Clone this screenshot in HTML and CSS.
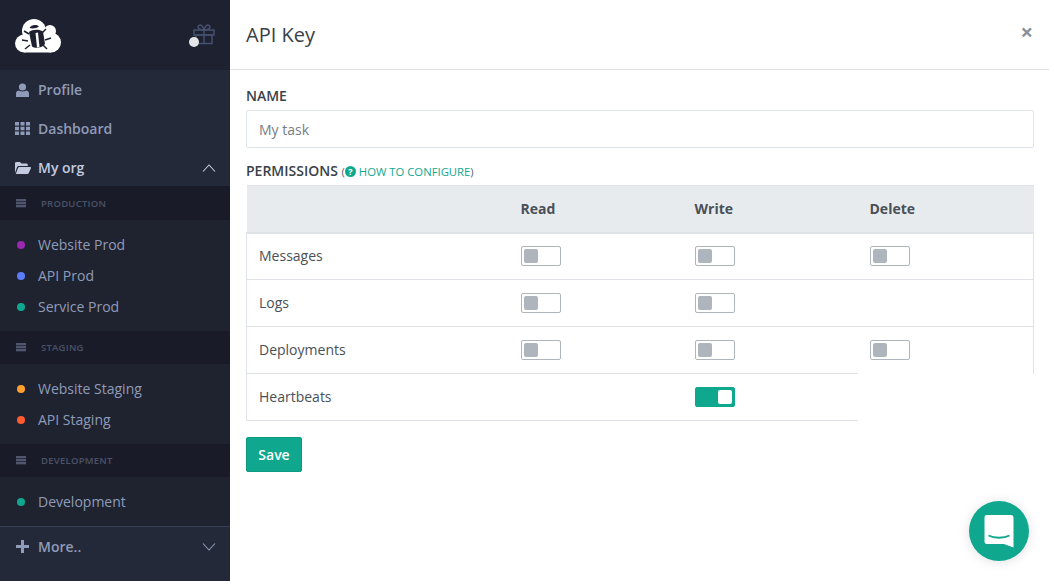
FILE: index.html
```html
<!DOCTYPE html>
<html lang="en">
<head>
    <meta charset="UTF-8">
    <title>API Key</title>
    <link rel="stylesheet" href="styles.css">
</head>
<body>
    <div class="app">
        <aside class="sidebar">
            <div class="brand">
                <svg class="logo" width="48" height="36" viewBox="0 0 48 36">
                    <g fill="#fff">
                        <circle cx="9" cy="26.500" r="9"/>
                        <circle cx="36" cy="25.500" r="10"/>
                        <circle cx="19" cy="14" r="12"/>
                        <circle cx="35" cy="14" r="6"/>
                        <rect x="9" y="20" width="27" height="15.500"/>
                    </g>
                    <path fill="none" stroke="#1d2130" stroke-width="1.500" d="M9 14L14 17M31 12L27 16M7 23L13 24M36 21L30 23M10 32L15 28M32 32L28 28"/>
                    <path fill="#1d2130" d="M14 15C17 12.500 24 12 28 14.500L30 27C27 31 20 32 17 29.500Z"/>
                    <path fill="#fff" d="M20.500 16L23 15.500L24.500 30L22 30.500Z"/>
                    <path fill="#1d2130" d="M14.500 11C16 8 21 7 24 9.500C22 11.500 17 12 14.500 11Z"/>
                </svg>
                <span class="gift">
                    <svg width="23" height="21" viewBox="0 0 23 21" fill="none" stroke="#46506f" stroke-width="1.500">
                        <rect x="1" y="6" width="20" height="5"/>
                        <rect x="3" y="11" width="16" height="8.500"/>
                        <path d="M11 6V19.500M11 6C8 6 5 5 5 2.800C5 1 7.500 0.500 9 2C10 3 11 5 11 6ZM11 6C14 6 17 5 17 2.800C17 1 14.500 0.500 13 2C12 3 11 5 11 6Z"/>
                    </svg>
                    <i class="gift-dot"></i>
                </span>
            </div>
            <nav class="nav">
                <a class="nav-link">
                    <svg class="nav-icon" width="14" height="14" viewBox="0 0 14 14" fill="#8f9bb8">
                        <circle cx="7" cy="4" r="3.600"/>
                        <path d="M0.500 14V10.500C0.500 8.500 2 7.500 3.500 7.500C5 8.700 9 8.700 10.500 7.500C12 7.500 13.500 8.500 13.500 10.500V14Z"/>
                    </svg>
                    Profile
                </a>
                <a class="nav-link">
                    <svg class="nav-icon" width="15" height="13" viewBox="0 0 15 13" fill="#8f9bb8">
                        <path d="M0 0H4V3.500H0ZM5.500 0H9.500V3.500H5.500ZM11 0H15V3.500H11ZM0 4.700H4V8.200H0ZM5.500 4.700H9.500V8.200H5.500ZM11 4.700H15V8.200H11ZM0 9.500H4V13H0ZM5.500 9.500H9.500V13H5.500ZM11 9.500H15V13H11Z"/>
                    </svg>
                    Dashboard
                </a>
                <a class="nav-link is-open">
                    <svg class="nav-icon" width="16" height="12" viewBox="0 0 16 12" fill="#c2cbe0">
                        <path d="M0 11V1.500C0 0.700 0.500 0 1.300 0H5L6.500 1.500H11.500C12.300 1.500 12.800 2 12.800 3V4H4C3 4 2.400 4.500 2 5.300Z"/>
                        <path d="M0.800 12L3 6C3.300 5.400 3.800 5 4.500 5H15C15.800 5 16.200 5.700 15.900 6.300L13.600 11.300C13.400 11.700 13 12 12.500 12Z"/>
                    </svg>
                    My org
                    <svg class="caret" width="14" height="8" viewBox="0 0 14 8" fill="none" stroke="#c2cbe0" stroke-width="1.100"><path d="M1 7.500L7 1L13 7.500"/></svg>
                </a>

                <div class="group-title group-first"><i class="server"></i>Production</div>
                <ul class="group-list">
                    <li><i class="dot dot-purple"></i>Website Prod</li>
                    <li><i class="dot dot-blue"></i>API Prod</li>
                    <li><i class="dot dot-green"></i>Service Prod</li>
                </ul>

                <div class="group-title"><i class="server"></i>Staging</div>
                <ul class="group-list">
                    <li><i class="dot dot-orange"></i>Website Staging</li>
                    <li><i class="dot dot-red"></i>API Staging</li>
                </ul>

                <div class="group-title"><i class="server"></i>Development</div>
                <ul class="group-list">
                    <li><i class="dot dot-green"></i>Development</li>
                </ul>

                <a class="nav-link nav-more">
                    <svg class="nav-icon" width="13" height="13" viewBox="0 0 13 13" fill="#8f9bb8"><path d="M5 0H8V5H13V8H8V13H5V8H0V5H5Z"/></svg>
                    More..
                    <svg class="caret" width="14" height="8" viewBox="0 0 14 8" fill="none" stroke="#8f9bb8" stroke-width="1.100"><path d="M1 0.500L7 7L13 0.500"/></svg>
                </a>
            </nav>
        </aside>

        <main class="panel">
            <header class="panel-head">
                <h1>API Key</h1>
                <span class="close">×</span>
            </header>
            <form class="panel-body">
                <label class="field-label" for="name">Name</label>
                <input class="input" id="name" type="text" placeholder="My task">

                <div class="field-label perm-label">Permissions
                    <small>(<svg width="11" height="11" viewBox="0 0 11 11"><circle cx="5.500" cy="5.500" r="5.500" fill="#0fa88f"/><text x="5.500" y="8.500" text-anchor="middle" class="q">?</text></svg> <a>How to configure</a>)</small>
                </div>
                <table class="perms">
                    <thead>
                        <tr><th class="col-name"></th><th class="col-read">Read</th><th class="col-write">Write</th><th>Delete</th></tr>
                    </thead>
                    <tbody>
                        <tr>
                            <td>Messages</td>
                            <td><span class="switch"></span></td>
                            <td><span class="switch"></span></td>
                            <td><span class="switch"></span></td>
                        </tr>
                        <tr>
                            <td>Logs</td>
                            <td><span class="switch"></span></td>
                            <td><span class="switch"></span></td>
                            <td></td>
                        </tr>
                        <tr>
                            <td>Deployments</td>
                            <td><span class="switch"></span></td>
                            <td><span class="switch"></span></td>
                            <td><span class="switch"></span></td>
                        </tr>
                        <tr class="short-row">
                            <td>Heartbeats</td>
                            <td></td>
                            <td><span class="switch on"></span></td>
                        </tr>
                    </tbody>
                </table>
                <button class="save" type="button">Save</button>
            </form>
        </main>
    </div>

    <div class="chat">
        <svg width="30" height="33" viewBox="0 0 30 33">
            <path fill="#fff" d="M3 0H27C28.700 0 29.500 1 29.500 3V32.500L20 29H3C1 29 0.500 28 0.500 26V3C0.500 1 1 0 3 0Z"/>
            <path fill="none" stroke="#0fa88f" stroke-width="1.800" d="M4.500 20.500C10 23.500 20 23.500 25.500 20.500"/>
        </svg>
    </div>
</body>
</html>
```

FILE: styles.css
```css
* {
    box-sizing: border-box;
}
body {
    margin: 0;
    font-family: "Open Sans", sans-serif;
    font-size: 14px;
    color: #4a5057;
    background: #fff;
    overflow: hidden;
}
.app {
    display: flex;
    height: 581px;
}

/* sidebar */
.sidebar {
    width: 230px;
    flex-shrink: 0;
    display: flex;
    flex-direction: column;
    background: #242939;
}
.brand {
    height: 70px;
    padding: 0 15px;
    display: flex;
    align-items: center;
    justify-content: space-between;
    background: #1d2130;
}
.logo {
    margin-top: -1px;
}
.gift {
    position: relative;
    display: flex;
    margin: -2px -1px 0 0;
}
.gift-dot {
    position: absolute;
    left: -4px;
    bottom: -2px;
    width: 10px;
    height: 10px;
    border-radius: 50%;
    background: #e4e5e6;
}
.nav {
    flex: 1;
    display: flex;
    flex-direction: column;
}
.nav-link {
    height: 39px;
    padding: 0 14px 0 15px;
    display: flex;
    align-items: center;
    font-weight: 600;
    color: #8f9bb8;
}
.nav-icon {
    margin-right: 8px;
    width: 15px;
    flex-shrink: 0;
}
.is-open {
    color: #c2cbe0;
}
.is-open .nav-icon {
    width: 16px;
    margin-right: 7px;
}
.caret {
    margin-left: auto;
}
.group-title {
    height: 33px;
    padding-left: 16px;
    display: flex;
    align-items: center;
    font-size: 9.500px;
    letter-spacing: 0.250px;
    text-transform: uppercase;
    font-weight: 600;
    color: #4b5268;
    background: #191c28;
}
.group-first {
    height: 34px;
    margin-top: -1px;
}
.server {
    width: 10px;
    height: 9px;
    margin-right: 15px;
    background: repeating-linear-gradient(#4f566d 0 2px, #2a2e3f 2px 3px);
}
.group-list {
    margin: 0;
    padding: 9px 0;
    list-style: none;
    background: #1f2330;
}
.group-list li {
    height: 31px;
    padding-left: 17px;
    display: flex;
    align-items: center;
    color: #8f9bb8;
}
.group-list:last-of-type {
    border-bottom: 1px solid #363d58;
}
.dot {
    width: 8px;
    height: 8px;
    margin-right: 13px;
    border-radius: 50%;
}
.dot-purple { background: #9c27b0; }
.dot-blue { background: #5c7cfa; }
.dot-green { background: #0fa88f; }
.dot-orange { background: #ff9f2e; }
.dot-red { background: #ff5a30; }
.nav-more {
    height: 39px;
}

/* main panel */
.panel {
    flex: 1;
    min-width: 0;
}
.panel-head {
    height: 70px;
    padding: 0 16px;
    display: flex;
    align-items: center;
    justify-content: space-between;
    border-bottom: 1px solid #dfe3e8;
}
.panel-head h1 {
    margin: 0;
    font-size: 20px;
    font-weight: 400;
    color: #3a4149;
}
.close {
    font-size: 22px;
    font-weight: 700;
    line-height: 1;
    color: #8b9199;
    margin: -8px 0 0 0;
}
.panel-body {
    padding: 16px 15px 0 16px;
}
.field-label {
    display: block;
    height: 24px;
    line-height: 20px;
    font-weight: 600;
    text-transform: uppercase;
    color: #3a4149;
}
.input {
    display: block;
    width: 100%;
    height: 38px;
    padding: 0 12px;
    margin-bottom: 13px;
    border: 1px solid #dfe3ec;
    border-radius: 2px;
    font: inherit;
}
.input::placeholder {
    color: #777d85;
    opacity: 1;
}
.perm-label small {
    font-size: 11.300px;
    font-weight: 400;
    color: #5c6670;
}
.perm-label svg {
    vertical-align: -1px;
}
.perm-label a {
    color: #0fa88f;
}
.q {
    font-size: 9px;
    font-weight: 700;
    fill: #fff;
}
.perms {
    width: 788px;
    table-layout: fixed;
    border-collapse: collapse;
}
.perms th {
    height: 47px;
    padding: 0 12px;
    text-align: left;
    font-weight: 700;
    color: #4a5057;
    background: #e8ebee;
    border: 1px solid #dfe3e8;
    border-width: 1px 0 2px;
}
.col-name {
    width: 262px;
}
.col-read {
    width: 174px;
}
.col-write {
    width: 175px;
}
.perms td {
    height: 47px;
    padding: 0 12px;
    border-top: 1px solid #dfe3e8;
}
.perms td:first-child {
    padding-bottom: 2px;
    border-left: 1px solid #dfe3e8;
}
.perms td:nth-child(4) {
    border-right: 1px solid #dfe3e8;
}
.short-row td {
    border-bottom: 1px solid #dfe3e8;
}
.switch {
    display: block;
    position: relative;
    width: 40px;
    height: 20px;
    border: 1px solid #aeb5bc;
    border-radius: 2px;
    background: #fff;
}
.switch::after {
    content: "";
    position: absolute;
    top: 2px;
    left: 2px;
    width: 14px;
    height: 14px;
    border-radius: 2px;
    background: #aeb5bc;
}
.switch.on {
    background: #0fa88f;
    border-color: #0fa88f;
}
.switch.on::after {
    left: 22px;
    background: #fff;
}
.save {
    display: block;
    width: 56px;
    height: 35px;
    margin-top: 16px;
    padding: 0;
    border: 1px solid #0d9a83;
    border-radius: 2px;
    background: #0fa88f;
    color: #fff;
    font: 600 14px "Open Sans", sans-serif;
}

/* chat launcher */
.chat {
    position: fixed;
    left: 969px;
    top: 501px;
    width: 60px;
    height: 60px;
    display: flex;
    align-items: center;
    justify-content: center;
    border-radius: 50%;
    background: #0fa88f;
    box-shadow: 0 1px 12px rgba(0, 0, 0, 0.12);
}
```
